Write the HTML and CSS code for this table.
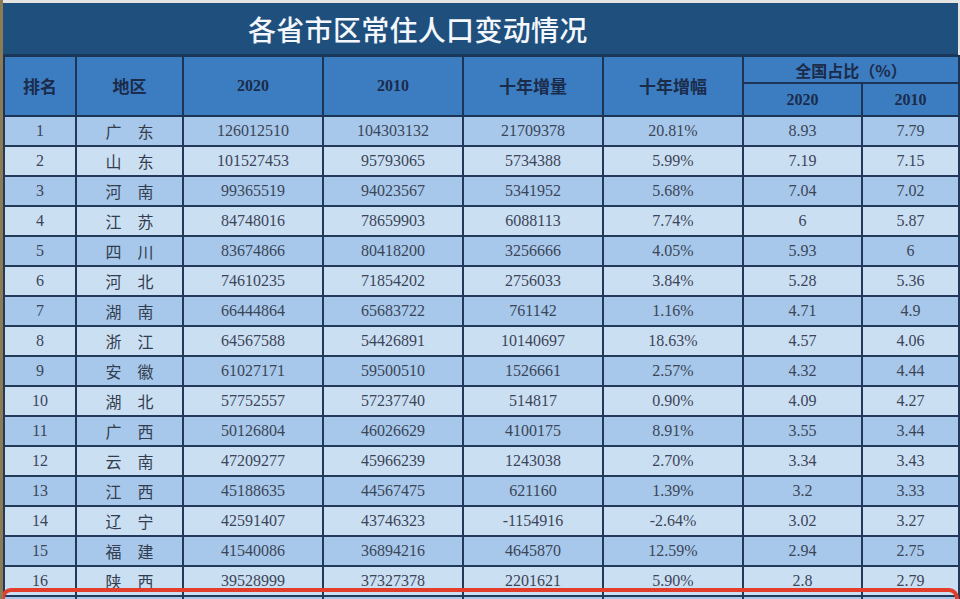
FILE: index.html
```html
<!DOCTYPE html>
<html lang="zh-CN">
<head>
<meta charset="utf-8">
<title>各省市区常住人口变动情况</title>
<link rel="stylesheet" href="styles.css">
</head>
<body>
<div class="page">
  <div class="sheet">
    <div class="title">各省市区常住人口变动情况</div>
    <table class="grid">
      <colgroup>
        <col class="c-rank"><col class="c-area"><col class="c-num"><col class="c-num">
        <col class="c-num"><col class="c-num"><col class="c-share1"><col class="c-share2">
      </colgroup>
      <thead>
        <tr class="h1">
          <th rowspan="2">排名</th>
          <th rowspan="2">地区</th>
          <th rowspan="2" class="yr">2020</th>
          <th rowspan="2" class="yr">2010</th>
          <th rowspan="2">十年增量</th>
          <th rowspan="2">十年增幅</th>
          <th colspan="2" class="share">全国占比（%）</th>
        </tr>
        <tr class="h2">
          <th class="yr">2020</th>
          <th class="yr">2010</th>
        </tr>
      </thead>
      <tbody>
        <tr><td>1</td><td class="area">广　东</td><td>126012510</td><td>104303132</td><td>21709378</td><td>20.81%</td><td>8.93</td><td>7.79</td></tr>
        <tr><td>2</td><td class="area">山　东</td><td>101527453</td><td>95793065</td><td>5734388</td><td>5.99%</td><td>7.19</td><td>7.15</td></tr>
        <tr><td>3</td><td class="area">河　南</td><td>99365519</td><td>94023567</td><td>5341952</td><td>5.68%</td><td>7.04</td><td>7.02</td></tr>
        <tr><td>4</td><td class="area">江　苏</td><td>84748016</td><td>78659903</td><td>6088113</td><td>7.74%</td><td>6</td><td>5.87</td></tr>
        <tr><td>5</td><td class="area">四　川</td><td>83674866</td><td>80418200</td><td>3256666</td><td>4.05%</td><td>5.93</td><td>6</td></tr>
        <tr><td>6</td><td class="area">河　北</td><td>74610235</td><td>71854202</td><td>2756033</td><td>3.84%</td><td>5.28</td><td>5.36</td></tr>
        <tr><td>7</td><td class="area">湖　南</td><td>66444864</td><td>65683722</td><td>761142</td><td>1.16%</td><td>4.71</td><td>4.9</td></tr>
        <tr><td>8</td><td class="area">浙　江</td><td>64567588</td><td>54426891</td><td>10140697</td><td>18.63%</td><td>4.57</td><td>4.06</td></tr>
        <tr><td>9</td><td class="area">安　徽</td><td>61027171</td><td>59500510</td><td>1526661</td><td>2.57%</td><td>4.32</td><td>4.44</td></tr>
        <tr><td>10</td><td class="area">湖　北</td><td>57752557</td><td>57237740</td><td>514817</td><td>0.90%</td><td>4.09</td><td>4.27</td></tr>
        <tr><td>11</td><td class="area">广　西</td><td>50126804</td><td>46026629</td><td>4100175</td><td>8.91%</td><td>3.55</td><td>3.44</td></tr>
        <tr><td>12</td><td class="area">云　南</td><td>47209277</td><td>45966239</td><td>1243038</td><td>2.70%</td><td>3.34</td><td>3.43</td></tr>
        <tr><td>13</td><td class="area">江　西</td><td>45188635</td><td>44567475</td><td>621160</td><td>1.39%</td><td>3.2</td><td>3.33</td></tr>
        <tr><td>14</td><td class="area">辽　宁</td><td>42591407</td><td>43746323</td><td>-1154916</td><td>-2.64%</td><td>3.02</td><td>3.27</td></tr>
        <tr><td>15</td><td class="area">福　建</td><td>41540086</td><td>36894216</td><td>4645870</td><td>12.59%</td><td>2.94</td><td>2.75</td></tr>
        <tr><td>16</td><td class="area">陕　西</td><td>39528999</td><td>37327378</td><td>2201621</td><td>5.90%</td><td>2.8</td><td>2.79</td></tr>
        <tr class="next"><td></td><td></td><td></td><td></td><td></td><td></td><td></td><td></td></tr>
      </tbody>
    </table>
    <div class="highlight"></div>
  </div>
</div>
</body>
</html>
```

FILE: styles.css
```css
html, body {
  margin: 0;
  padding: 0;
  background: #e4e4e2;
  overflow: hidden;
}

.page {
  width: 960px;
  height: 599px;
  padding-top: 3px;
  box-sizing: border-box;
  overflow: hidden;
  border-left: 3px solid #8c7c55;
}

.sheet {
  position: relative;
  width: 955px;
}

.title {
  height: 52px;
  box-sizing: border-box;
  background: #1f4f7d;
  border-bottom: 1px solid #173a5e;
  color: #f4f7fb;
  font-family: "Noto Sans CJK SC", "Noto Sans", sans-serif;
  font-size: 28px;
  font-weight: 500;
  line-height: 52px;
  padding-left: 245px;
  letter-spacing: 0.3px;
}

.grid {
  width: 955px;
  table-layout: fixed;
  border-collapse: collapse;
  font-family: "Liberation Serif", "Noto Sans CJK SC", serif;
}

.c-rank { width: 72px; }
.c-area { width: 107px; }
.c-num { width: 140px; }
.c-share1 { width: 119px; }
.c-share2 { width: 97px; }

.grid th {
  background: #3c7dc2;
  color: #1b2b4a;
  border: 2px solid #1c3557;
  font-family: "Noto Sans CJK SC", sans-serif;
  font-weight: 700;
  font-size: 17px;
  padding: 0;
  text-align: center;
  line-height: 20px;
}

.grid th.yr {
  font-family: "Liberation Serif", serif;
  font-size: 16px;
}

.grid .h1 th { height: 25px; }
.grid .h2 th { height: 31px; }

.grid th.share {
  font-size: 16px;
}

.grid td {
  height: 28px;
  padding: 0;
  border: 2px solid #23395a;
  text-align: center;
  color: #3b4558;
  font-size: 16px;
  line-height: 24px;
}

.grid tbody tr:nth-child(odd) td { background: #a7c8ea; }
.grid tbody tr:nth-child(even) td { background: #cbdff3; }

.grid td.area {
  font-family: "Noto Sans CJK SC", sans-serif;
  font-size: 16px;
  color: #333d4e;
}

.highlight {
  position: absolute;
  left: -2px;
  top: 585px;
  width: 958px;
  height: 40px;
  box-sizing: border-box;
  border: 4px solid #e23e2b;
  border-radius: 10px;
  pointer-events: none;
}
```
